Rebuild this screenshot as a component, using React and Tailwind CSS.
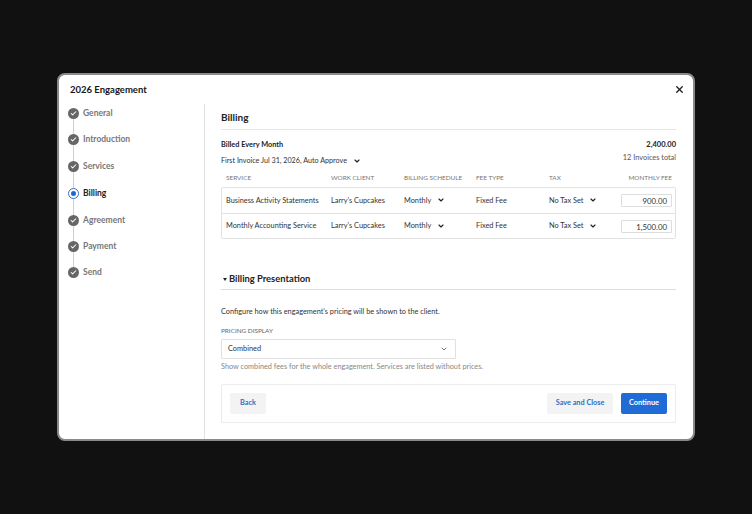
import { Check, ChevronDown, X } from "lucide-react";

const STEPS = ["General", "Introduction", "Services", "Billing", "Agreement", "Payment", "Send"];
const STEP_HEIGHTS = ["h-[26px]", "h-[26px]", "h-[28px]", "h-[26px]", "h-[28px]", "h-[24px]", "h-[28px]"];

const ROWS = [
  { service: "Business Activity Statements", fee: "900.00" },
  { service: "Monthly Accounting Service", fee: "1,500.00" },
];

const COLS = "grid grid-cols-[105px_73px_72px_73px_72px_1fr]";

function Step({ name, index }) {
  const current = name === "Billing";
  return (
    <div className={`relative flex items-center ${STEP_HEIGHTS[index]}`}>
      {index < STEPS.length - 1 && (
        <div className="absolute left-[5px] top-[13px] h-[26px] w-px bg-[#cfcfcf]" />
      )}
      {current ? (
        <div className="relative flex size-[11px] items-center justify-center rounded-full border border-[#2f6fd0] bg-white">
          <div className="size-[5px] rounded-full bg-[#2468cc]" />
        </div>
      ) : (
        <div className="relative flex size-[11px] items-center justify-center rounded-full bg-[#666666]">
          <Check size={7} strokeWidth={3.5} className="text-white" />
        </div>
      )}
      <span className={`ml-[4px] text-[8.5px] font-bold ${current ? "text-[#222222]" : "text-[#777777]"}`}>
        {name}
      </span>
    </div>
  );
}

function InlineSelect({ label }) {
  return (
    <div className="flex items-center">
      <span>{label}</span>
      <ChevronDown size={8} strokeWidth={3.5} className="ml-[6px] text-[#222222]" />
    </div>
  );
}

export default function App() {
  return (
    <div className="flex h-[514px] w-[752px] items-center justify-center bg-[#111111] font-['Lato','Open_Sans',sans-serif]">
      <div className="flex h-[368px] w-[638px] flex-col rounded-[8px] border-2 border-[#8a8a8a] bg-white">
        {/* header */}
        <div className="flex h-[29px] shrink-0 items-start justify-between pl-[11px] pr-[8px] pt-[8px]">
          <h1 className="text-[9.5px] font-bold leading-[14px] text-[#161616]">2026 Engagement</h1>
          <X size={11} strokeWidth={3} className="mt-[1px] text-[#222222]" />
        </div>

        <div className="flex min-h-0 flex-1">
          {/* steps */}
          <nav className="w-[146px] shrink-0 border-r border-[#e2e2e2] pl-[9px]">
            <div className="-mt-[4px]">
              {STEPS.map((s, i) => (
                <Step key={s} name={s} index={i} />
              ))}
            </div>
          </nav>

          {/* billing */}
          <main className="min-w-0 flex-1 pl-[16px] pr-[17px] text-[7.35px] text-[#333333]">
            <h2 className="mt-[6px] border-b border-[#e6e6e6] pb-[4px] text-[10px] font-bold leading-[15px] text-[#222222]">
              Billing
            </h2>

            <div className="mt-[9px] flex justify-between">
              <div>
                <div className="font-bold leading-[12px] text-[#222222]">Billed Every Month</div>
                <div className="mt-[4px] text-[7.2px] leading-[12px]">
                  <InlineSelect label="First Invoice Jul 31, 2026, Auto Approve" />
                </div>
              </div>
              <div className="text-right">
                <div className="text-[7.5px] font-bold leading-[12px] text-[#222222]">2,400.00</div>
                <div className="mt-[1px] leading-[12px] text-[#555555]">12 Invoices total</div>
              </div>
            </div>

            <div className={`${COLS} mt-[1px] h-[19px] items-center pl-[5px] pr-[4px] text-[6.4px] text-[#777777]`}>
              <span>SERVICE</span>
              <span>WORK CLIENT</span>
              <span>BILLING SCHEDULE</span>
              <span>FEE TYPE</span>
              <span>TAX</span>
              <span className="text-right">MONTHLY FEE</span>
            </div>

            <div className="rounded-[2px] border border-[#e2e2e2]">
              {ROWS.map((r, i) => (
                <div
                  key={r.service}
                  className={`${COLS} h-[25px] items-center pl-[4px] pr-[3px] ${i > 0 ? "border-t border-[#e2e2e2]" : ""}`}
                >
                  <span className="whitespace-nowrap">{r.service}</span>
                  <span>Larry's Cupcakes</span>
                  <InlineSelect label="Monthly" />
                  <span>Fixed Fee</span>
                  <InlineSelect label="No Tax Set" />
                  <div className="ml-auto h-[13px] w-[51px] rounded-[1px] border border-[#dddddd] pr-[4px] text-right text-[7.8px] leading-[12px]">
                    {r.fee}
                  </div>
                </div>
              ))}
            </div>

            <div className="mt-[33px] flex items-center border-b border-[#dddddd] pb-[3px]">
              <span className="ml-[2px] mr-[2px] h-0 w-0 border-x-[2.5px] border-t-[3px] border-x-transparent border-t-[#222222]" />
              <h2 className="text-[9.4px] font-bold leading-[14px] text-[#222222]">Billing Presentation</h2>
            </div>

            <p className="mt-[16px] leading-[12px]">Configure how this engagement's pricing will be shown to the client.</p>

            <div className="mt-[8px] text-[6.4px] leading-[10px] text-[#666666]">PRICING DISPLAY</div>
            <div className="mt-[3px] flex h-[20px] w-[235px] items-center justify-between rounded-[1px] border border-[#e0e0e0] pl-[6px] pr-[7px]">
              <span>Combined</span>
              <ChevronDown size={8} strokeWidth={2.5} className="text-[#555555]" />
            </div>
            <p className="mt-[2px] text-[7.3px] leading-[12px] text-[#888888]">
              Show combined fees for the whole engagement. Services are listed without prices.
            </p>

            <div className="mt-[11px] flex h-[39px] items-center justify-between rounded-[2px] border border-[#ececec] px-[8px]">
              <button className="h-[21px] w-[36px] rounded-[2px] bg-[#f3f3f3] text-[7.3px] font-bold text-[#2f6fc4]">
                Back
              </button>
              <div className="flex gap-[8px]">
                <button className="h-[21px] w-[66px] rounded-[2px] bg-[#f3f3f3] text-[7.3px] font-bold text-[#2f6fc4]">
                  Save and Close
                </button>
                <button className="h-[21px] w-[46px] rounded-[2px] bg-[#1f6cd6] text-[7.3px] font-bold text-white">
                  Continue
                </button>
              </div>
            </div>
          </main>
        </div>
      </div>
    </div>
  );
}
